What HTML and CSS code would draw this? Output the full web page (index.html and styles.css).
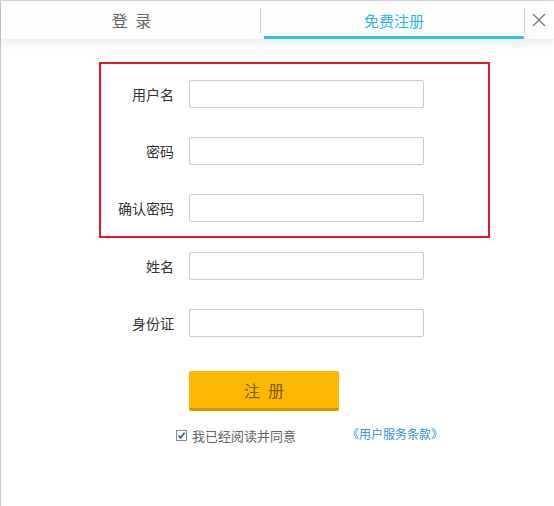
FILE: index.html
```html
<!DOCTYPE html>
<html lang="zh-CN">
<head>
    <meta charset="UTF-8">
    <title>免费注册</title>
    <link rel="stylesheet" href="styles.css">
</head>
<body>
    <div class="dialog">
        <div class="tabs">
            <div class="tab">登 录</div>
            <div class="tab active"><span>免费注册</span></div>
            <div class="close">
                <svg width="16" height="16" viewBox="0 0 16 16">
                    <path d="M2 2 L14 14 M14 2 L2 14" stroke="#777" stroke-width="1.3" fill="none"/>
                </svg>
            </div>
        </div>
        <form class="form">
            <div class="highlight">
                <div class="row">
                    <label>用户名</label>
                    <input type="text">
                </div>
                <div class="row">
                    <label>密码</label>
                    <input type="password">
                </div>
                <div class="row">
                    <label>确认密码</label>
                    <input type="password">
                </div>
            </div>
            <div class="plain">
                <div class="row">
                    <label>姓名</label>
                    <input type="text">
                </div>
                <div class="row">
                    <label>身份证</label>
                    <input type="text">
                </div>
                <div class="actions">
                    <button type="button" class="submit">注册</button>
                </div>
                <div class="agree">
                    <span class="check">
                        <svg width="11" height="11" viewBox="0 0 11 11">
                            <rect x="0.5" y="0.5" width="10" height="10" fill="#fff" stroke="#888"/>
                            <path d="M2.5 5.5 L4.5 7.8 L8.6 2.8" stroke="#1f4f8f" stroke-width="1.6" fill="none"/>
                        </svg>
                    </span>
                    <span class="agree-text">我已经阅读并同意</span>
                    <a class="terms" href="#">《用户服务条款》</a>
                </div>
            </div>
        </form>
    </div>
</body>
</html>
```

FILE: styles.css
```css
body {
    margin: 0;
    padding: 0;
    background-color: #fff;
    font-family: "Noto Sans CJK SC", "Microsoft YaHei", sans-serif;
}
.dialog {
    height: 505px;
    border-top: 1px solid #d8d8d8;
    border-left: 1px solid #c8c8c8;
    background-color: #fff;
}
.tabs {
    display: flex;
    height: 38px;
    background-color: #fdfdfb;
    box-shadow: 0 3px 9px rgba(0, 0, 0, 0.1);
}
.tab {
    width: 260px;
    display: flex;
    justify-content: center;
    align-items: center;
    font-size: 16px;
    color: #666;
    letter-spacing: 2px;
    position: relative;
    padding-left: 3px;
    box-sizing: border-box;
}
.tab:first-child::after {
    content: "";
    position: absolute;
    right: 0;
    top: 7px;
    height: 25px;
    width: 1px;
    background-color: #ccc;
}
.tab.active {
    width: 260px;
    margin-left: 3px;
    padding-left: 0;
    color: #2bb6ea;
    letter-spacing: 0;
    font-size: 15px;
    border-bottom: 3px solid #2ec2ef;
    padding-top: 3px;
}
.close {
    flex: 1;
    display: flex;
    justify-content: center;
    align-items: center;
    position: relative;
}
.close::before {
    content: "";
    position: absolute;
    left: 0;
    top: 7px;
    height: 25px;
    width: 1px;
    background-color: #ccc;
}
.form {
    padding-top: 23px;
}
.highlight {
    width: 387px;
    margin-left: 98px;
    border: 2px solid #e8151f;
    padding: 16px 0 14px 0;
    display: flex;
    flex-direction: column;
    gap: 29px;
}
.plain {
    margin-left: 100px;
    padding-top: 14px;
    display: flex;
    flex-direction: column;
    gap: 29px;
}
.row {
    display: flex;
    align-items: center;
}
.row label {
    width: 73px;
    margin-right: 15px;
    text-align: right;
    font-size: 14px;
    color: #333;
}
.row input {
    width: 235px;
    height: 28px;
    box-sizing: border-box;
    border: 1px solid #c9c9c9;
    border-radius: 2px;
    background-color: #fff;
    outline: none;
}
.actions {
    padding-left: 88px;
    margin-top: 5px;
}
.submit {
    width: 150px;
    height: 40px;
    border: none;
    border-bottom: 3px solid #dc9400;
    border-radius: 2px;
    background-color: #ffb800;
    color: #7b5b08;
    font-family: "Noto Sans CJK SC", sans-serif;
    font-size: 16px;
    letter-spacing: 8px;
    padding: 0 0 0 8px;
}
.agree {
    display: flex;
    align-items: center;
    margin-top: -14px;
    padding-left: 75px;
    font-size: 13px;
}
.check {
    display: flex;
    margin-right: 5px;
}
.agree-text {
    color: #666;
}
.terms {
    margin-left: 51px;
    color: #2e8fd8;
    text-decoration: none;
    font-size: 12px;
    position: relative;
    top: -2px;
}
```
